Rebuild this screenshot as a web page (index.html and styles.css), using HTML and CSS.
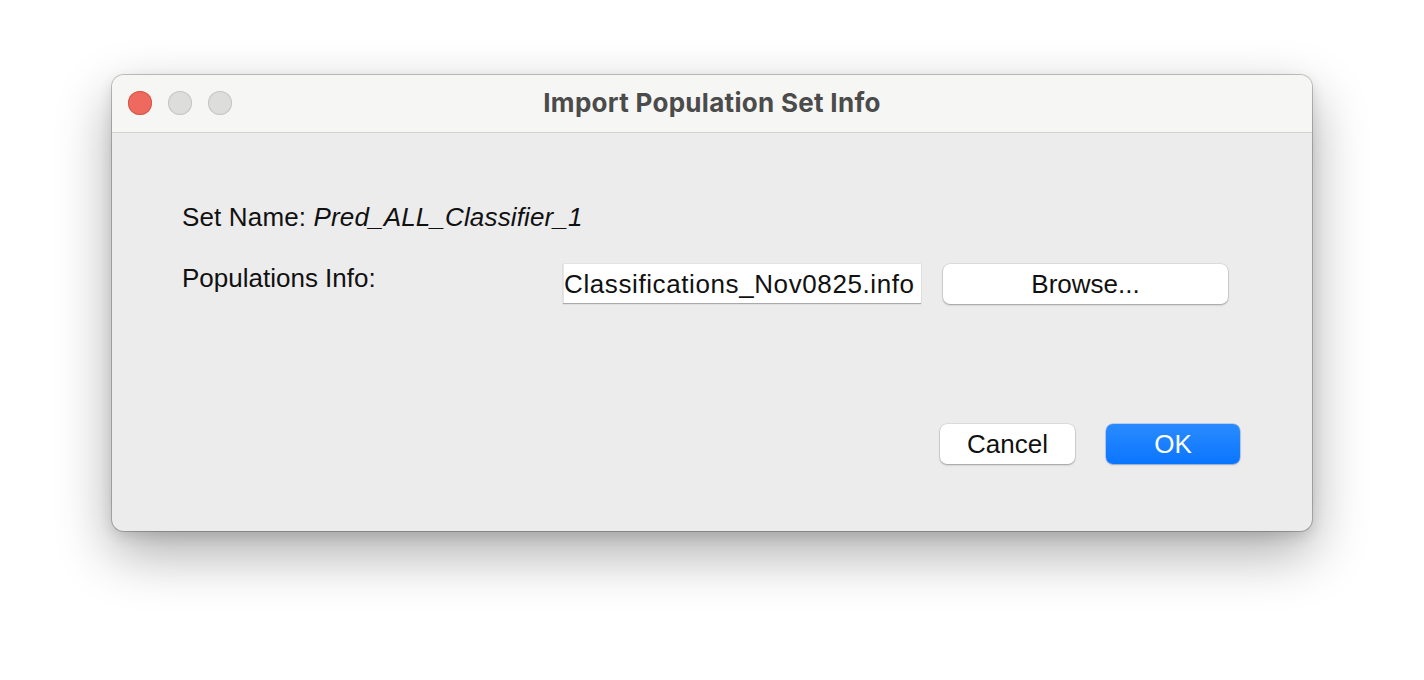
FILE: index.html
```html
<!DOCTYPE html>
<html>
<head>
<meta charset="utf-8">
<link rel="stylesheet" href="styles.css">
</head>
<body>
<div class="window">
  <div class="titlebar">
    <div class="lights">
      <span class="light red"></span>
      <span class="light grey"></span>
      <span class="light grey"></span>
    </div>
    <div class="title">Import Population Set Info</div>
  </div>
  <div class="content">
    <div class="row-name">Set Name: <em>Pred_ALL_Classifier_1</em></div>
    <div class="row-info">
      <div class="label">Populations Info:</div>
      <div class="field">Classifications_Nov0825.info</div>
      <button class="btn browse">Browse...</button>
    </div>
    <div class="footer">
      <button class="btn cancel">Cancel</button>
      <button class="btn ok">OK</button>
    </div>
  </div>
</div>
</body>
</html>
```
FILE: styles.css
```css
* { box-sizing: border-box; }
html, body { margin: 0; padding: 0; background: #ffffff; }
body { width: 1424px; height: 680px; overflow: hidden; font-family: "Liberation Sans", Arial, sans-serif; }

.window {
  margin: 75px 0 0 112px;
  width: 1200px;
  height: 456px;
  border-radius: 12px;
  background: #ececec;
  box-shadow: 0 0 0 1px rgba(0,0,0,0.22), 0 22px 55px rgba(0,0,0,0.33), 0 5px 14px rgba(0,0,0,0.12);
  overflow: hidden;
  display: flex;
  flex-direction: column;
}

.titlebar {
  position: relative;
  height: 58px;
  background: #f6f6f4;
  border-bottom: 1px solid #d3d3d3;
  display: flex;
  align-items: center;
  justify-content: center;
}
.lights {
  position: absolute;
  left: 16px;
  top: 16px;
  display: flex;
  gap: 16px;
}
.light {
  width: 24px;
  height: 24px;
  border-radius: 50%;
  display: block;
}
.light.red { background: #ee6a5e; box-shadow: inset 0 0 0 1px #d9564b; }
.light.grey { background: #dddddc; box-shadow: inset 0 0 0 1px #c6c6c5; }

.title {
  font-family: Inter, "Liberation Sans", sans-serif;
  font-weight: 700;
  font-size: 26px;
  letter-spacing: 0.3px;
  color: #4b4b4b;
  line-height: 30px;
  margin-top: -1px;
}

.content {
  flex: 1;
  padding: 69px 72px 67px 70px;
  display: flex;
  flex-direction: column;
  font-size: 26px;
  color: #111;
}
.row-name { line-height: 30px; height: 30px; letter-spacing: 0.15px; }
.row-name em { font-style: italic; }

.row-info {
  margin-top: 31px;
  display: flex;
  align-items: flex-start;
}
.label { width: 381px; line-height: 30px; margin-top: 0; }
.field {
  width: 358px;
  height: 40px;
  line-height: 40px;
  background: #fff;
  border-top: 1px solid #e2e2e2;
  border-left: 1px solid #e6e6e6;
  box-shadow: 0 1px 1px rgba(0,0,0,0.28);
  overflow: hidden;
  white-space: nowrap;
  padding-left: 0;
  letter-spacing: 0.6px;
  margin-right: 22px;
}

.btn {
  font-family: "Liberation Sans", Arial, sans-serif;
  font-size: 26px;
  color: #111;
  background: #fff;
  border: none;
  border-radius: 7px;
  height: 40px;
  padding: 0;
  box-shadow: 0 0 0 0.5px rgba(0,0,0,0.12), 0 1px 2px rgba(0,0,0,0.3);
}
.browse { width: 285px; margin-top: 1px; }

.footer {
  margin-top: auto;
  display: flex;
  justify-content: flex-end;
  gap: 31px;
}
.cancel { width: 135px; }
.ok {
  width: 134px;
  color: #fff;
  background: linear-gradient(#2a8bff, #0a75ff);
  box-shadow: 0 0 0 0.5px rgba(0,90,220,0.4), 0 1px 2px rgba(0,0,0,0.2);
}
```
